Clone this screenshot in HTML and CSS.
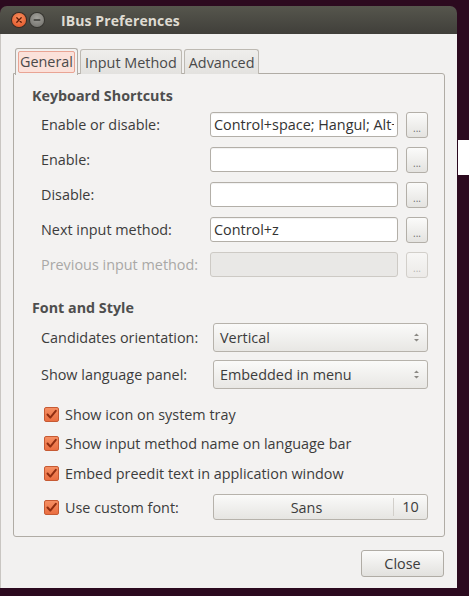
FILE: index.html
```html
<!DOCTYPE html>
<html>
<head>
<meta charset="utf-8">
<link rel="stylesheet" href="styles.css">
</head>
<body>
<div class="desk">
  <div class="window">
    <div class="titlebar">
      <span class="wbtn close-btn">
        <svg width="14" height="14" viewBox="0 0 14 14"><path d="M4.8 4.8 L9.2 9.2 M9.2 4.8 L4.8 9.2" stroke="#5a1a08" stroke-width="1.3" stroke-linecap="round"/></svg>
      </span>
      <span class="wbtn min-btn">
        <svg width="14" height="14" viewBox="0 0 14 14"><path d="M4.2 7 L9.8 7" stroke="#3a3a36" stroke-width="1.4" stroke-linecap="round"/></svg>
      </span>
      <span class="title">IBus Preferences</span>
    </div>
    <div class="wbody">
      <div class="notebook">
        <div class="tabs">
          <div class="tab active"><span class="focus">General</span></div>
          <div class="tab">Input Method</div>
          <div class="tab">Advanced</div>
        </div>
        <div class="panel">
          <div class="heading">Keyboard Shortcuts</div>
          <div class="shortcuts">
            <div class="srow">
              <span class="label">Enable or disable:</span>
              <span class="entry"><span class="etext">Control+space; Hangul; Alt+</span></span>
              <span class="dots">...</span>
            </div>
            <div class="srow">
              <span class="label">Enable:</span>
              <span class="entry"></span>
              <span class="dots">...</span>
            </div>
            <div class="srow">
              <span class="label">Disable:</span>
              <span class="entry"></span>
              <span class="dots">...</span>
            </div>
            <div class="srow">
              <span class="label">Next input method:</span>
              <span class="entry"><span class="etext">Control+z</span></span>
              <span class="dots">...</span>
            </div>
            <div class="srow disabled">
              <span class="label">Previous input method:</span>
              <span class="entry"></span>
              <span class="dots">...</span>
            </div>
          </div>
          <div class="heading second">Font and Style</div>
          <div class="crow first">
            <span class="label wide">Candidates orientation:</span>
            <span class="combo">Vertical<svg class="arrows" width="7" height="11" viewBox="0 0 7 11"><path d="M1 4 L3.5 1.5 L6 4 Z M1 7 L3.5 9.5 L6 7 Z" fill="#8a8883"/></svg></span>
          </div>
          <div class="crow">
            <span class="label wide">Show language panel:</span>
            <span class="combo">Embedded in menu<svg class="arrows" width="7" height="11" viewBox="0 0 7 11"><path d="M1 4 L3.5 1.5 L6 4 Z M1 7 L3.5 9.5 L6 7 Z" fill="#8a8883"/></svg></span>
          </div>
          <div class="checks">
            <div class="check"><span class="box"><svg width="15" height="15" viewBox="0 0 15 15"><path d="M3.5 7.5 L6.3 10.6 L11.8 3.8" fill="none" stroke="#8f2d10" stroke-width="2" stroke-linecap="round" stroke-linejoin="round"/></svg></span>Show icon on system tray</div>
            <div class="check"><span class="box"><svg width="15" height="15" viewBox="0 0 15 15"><path d="M3.5 7.5 L6.3 10.6 L11.8 3.8" fill="none" stroke="#8f2d10" stroke-width="2" stroke-linecap="round" stroke-linejoin="round"/></svg></span>Show input method name on language bar</div>
            <div class="check"><span class="box"><svg width="15" height="15" viewBox="0 0 15 15"><path d="M3.5 7.5 L6.3 10.6 L11.8 3.8" fill="none" stroke="#8f2d10" stroke-width="2" stroke-linecap="round" stroke-linejoin="round"/></svg></span>Embed preedit text in application window</div>
            <div class="check fontrow">
              <span class="checklabel"><span class="box"><svg width="15" height="15" viewBox="0 0 15 15"><path d="M3.5 7.5 L6.3 10.6 L11.8 3.8" fill="none" stroke="#8f2d10" stroke-width="2" stroke-linecap="round" stroke-linejoin="round"/></svg></span>Use custom font:</span>
              <span class="fontbtn"><span class="fname">Sans</span><span class="fsize">10</span></span>
            </div>
          </div>
        </div>
      </div>
      <div class="actions">
        <span class="button">Close</span>
      </div>
    </div>
  </div>
  <div class="side">
    <div class="whitebar"></div>
  </div>
</div>
</body>
</html>
```

FILE: styles.css
```css
html, body {
  margin: 0;
  padding: 0;
}
body {
  background: #2c0a1f;
  width: 469px;
  height: 596px;
  overflow: hidden;
  font-family: "Open Sans", "DejaVu Sans", sans-serif;
  font-size: 14.4px;
  color: #3c3c3c;
}
.desk {
  display: flex;
  align-items: flex-start;
}
.window {
  width: 457px;
  margin-top: 6px;
  flex: none;
}
.titlebar {
  height: 28px;
  border-radius: 7px 7px 0 0;
  background: linear-gradient(#56564d, #403f3a);
  display: flex;
  align-items: center;
  padding-left: 12px;
  box-sizing: border-box;
}
.wbtn {
  width: 14px;
  height: 14px;
  border-radius: 50%;
  display: flex;
  align-items: center;
  justify-content: center;
  margin-right: 4px;
}
.close-btn {
  background: radial-gradient(circle at 50% 35%, #f6905f, #e24f22);
  box-shadow: 0 0 0 1px #3a2a22;
}
.min-btn {
  background: radial-gradient(circle at 50% 35%, #a3a29c, #6e6d68);
  box-shadow: 0 0 0 1px #35342f;
}
.title {
  margin-left: 13px;
  color: #dfdbd2;
  font-weight: bold;
  font-size: 14px;
  letter-spacing: 0.1px;
}
.wbody {
  background: #f2f1f0;
  height: 554px;
  box-sizing: border-box;
  padding: 14px 12px 0 12px;
  border-left: 1px solid #c9c6c2;
}
.notebook {
  display: flex;
  flex-direction: column;
}
.tabs {
  display: flex;
  gap: 2px;
  padding-left: 2px;
  height: 25px;
  position: relative;
  z-index: 1;
}
.tab {
  border: 1px solid #bdb9b2;
  border-bottom: none;
  border-radius: 3px 3px 0 0;
  background: linear-gradient(#efeeec, #e3e2df);
  padding: 0 4px;
  display: flex;
  align-items: center;
  height: 24px;
  margin-top: 1px;
  color: #4a4a4a;
}
.tab.active {
  background: #f2f1f0;
  height: 26px;
  margin-top: 0;
  padding: 0 2px;
  border-color: #b0aca5;
}
.focus {
  background: #fbe1da;
  border: 1px solid #e9a494;
  border-radius: 2px;
  padding: 0 1px 1px;
  line-height: 19px;
}
.panel {
  border: 1px solid #b0aca5;
  background: #f3f2f1;
  height: 464px;
  box-sizing: border-box;
  padding: 12px 16px 0 18px;
  border-radius: 0 3px 3px 3px;
}
.heading {
  font-weight: bold;
  font-size: 14.3px;
  line-height: 20px;
  color: #4e4e4e;
}
.heading.second {
  margin-top: 21px;
}
.shortcuts {
  margin-top: 6px;
  padding-left: 9px;
  display: flex;
  flex-direction: column;
  gap: 10px;
}
.srow {
  display: flex;
  align-items: center;
  height: 25px;
}
.label {
  width: 169px;
  flex: none;
  white-space: nowrap;
}
.entry {
  width: 188px;
  height: 25px;
  box-sizing: border-box;
  border: 1px solid #b3afa8;
  border-radius: 3px;
  background: #fff;
  padding: 0 3px;
  line-height: 23px;
  white-space: nowrap;
  overflow: hidden;
  color: #333;
  box-shadow: inset 0 1px 1px rgba(0,0,0,0.06);
}
.etext {
  display: block;
  overflow: hidden;
}
.dots {
  margin-left: 8px;
  width: 22px;
  height: 26px;
  box-sizing: border-box;
  border: 1px solid #b3afa8;
  border-radius: 3px;
  background: linear-gradient(#fbfbfa, #e4e3e0);
  font-size: 10px;
  line-height: 24px;
  text-align: center;
  color: #6e6e6e;
  padding-top: 3px;
}
.srow.disabled .label {
  color: #a9a8a6;
}
.srow.disabled .entry {
  background: #e9e8e6;
  border-color: #cdcac5;
  box-shadow: none;
}
.srow.disabled .dots {
  border-color: #d2cfca;
  background: linear-gradient(#f7f6f5, #eceae8);
  color: #b5b4b1;
}
.crow {
  display: flex;
  align-items: center;
  padding-left: 9px;
  margin-top: 8px;
}
.crow.first {
  margin-top: 5px;
}
.label.wide {
  width: 172px;
}
.combo {
  width: 215px;
  height: 29px;
  box-sizing: border-box;
  border: 1px solid #b6b2ab;
  border-radius: 3px;
  background: linear-gradient(#fafaf9, #e8e7e4);
  display: flex;
  align-items: center;
  justify-content: space-between;
  padding: 0 7px 0 6px;
  color: #3c3c3c;
}
.arrows {
  display: block;
}
.checks {
  margin-top: 14px;
  padding-left: 12px;
  display: flex;
  flex-direction: column;
  gap: 7px;
}
.check {
  display: flex;
  align-items: center;
  height: 22px;
  white-space: nowrap;
}
.check:nth-child(3) {
  margin-top: 1px;
}
.box {
  width: 15px;
  height: 15px;
  box-sizing: border-box;
  border: 1px solid #c65a33;
  border-radius: 2px;
  background: linear-gradient(#f58f63, #ea6e41);
  margin-right: 6px;
  flex: none;
  display: flex;
  align-items: center;
  justify-content: center;
}
.box svg {
  display: block;
  margin: -1px;
}
.fontrow {
  height: 26px;
  margin-top: 3px;
}
.checklabel {
  display: flex;
  align-items: center;
  width: 169px;
  flex: none;
}
.fontbtn {
  width: 215px;
  height: 26px;
  box-sizing: border-box;
  border: 1px solid #b6b2ab;
  border-radius: 3px;
  background: linear-gradient(#fafaf9, #e6e5e2);
  display: flex;
  align-items: center;
}
.fname {
  flex: 1;
  text-align: center;
  padding-left: 6px;
}
.fsize {
  border-left: 1px solid #d2cfca;
  width: 33px;
  text-align: center;
  line-height: 18px;
}
.actions {
  display: flex;
  justify-content: flex-end;
  margin-top: 13px;
  padding-right: 1px;
}
.button {
  width: 83px;
  height: 27px;
  box-sizing: border-box;
  border: 1px solid #b0aca5;
  border-radius: 3px;
  background: linear-gradient(#fbfbfa, #e2e1de);
  display: flex;
  align-items: center;
  justify-content: center;
  color: #3c3c3c;
  font-size: 14.4px;
}
.side {
  margin-left: 1px;
  padding-top: 140px;
}
.whitebar {
  width: 11px;
  height: 35px;
  background: #ffffff;
}
```
